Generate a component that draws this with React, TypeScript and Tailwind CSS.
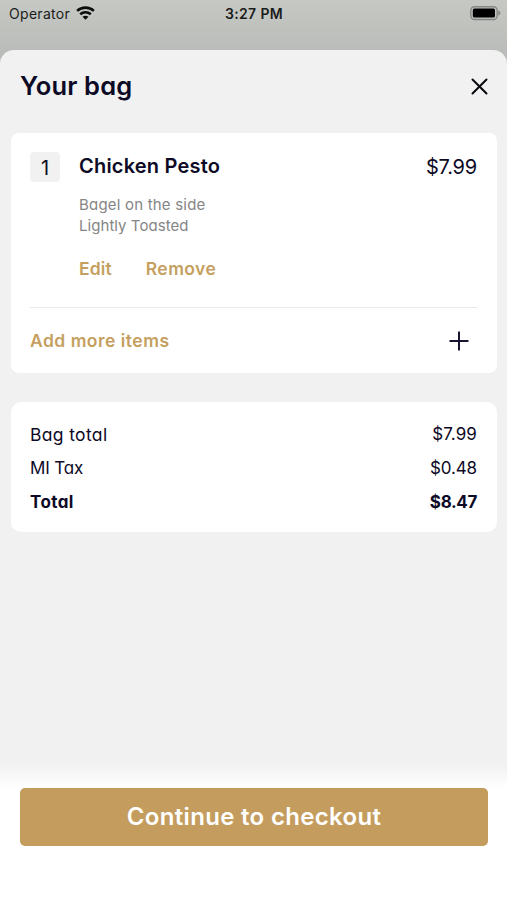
import React from "react";

function WifiIcon() {
  return (
    <svg width="19" height="14" viewBox="0 0 19 14" fill="none" stroke="#0c0e0c" strokeWidth="2.6">
      <path d="M1.1 4.9C5.8 0.5 13.2 0.5 17.9 4.9" />
      <path d="M4.2 8.3C7.2 5.6 11.8 5.6 14.8 8.3" />
      <path d="M9.5 13.8L6.5 10.7C8.2 9.3 10.8 9.3 12.5 10.7Z" fill="#0c0e0c" stroke="none" />
    </svg>
  );
}

function BatteryIcon() {
  return (
    <svg width="31" height="15" viewBox="0 0 31 15" fill="none">
      <rect x="0.8" y="0.7" width="26.4" height="12.8" rx="3.8" stroke="#848682" strokeWidth="1.4" />
      <rect x="2.8" y="2.4" width="22.2" height="9.2" rx="1.6" fill="#000" />
      <path d="M28.4 4.6C31 5.5 31 8.7 28.4 9.6Z" fill="#848682" />
    </svg>
  );
}

function SummaryRow({ label, labelClass, value, valueClass }: { label: string; labelClass: string; value: string; valueClass: string }) {
  return (
    <div className="flex h-[34px] items-center justify-between">
      <span className={labelClass}>{label}</span>
      <span className={valueClass}>{value}</span>
    </div>
  );
}

export default function App() {
  return (
    <div className="flex h-[900px] w-[507px] flex-col overflow-hidden bg-linear-to-b from-[#c6c8c4] from-0% to-[#b7bab6] to-[60px] font-['Inter',sans-serif] whitespace-nowrap text-[#0d0a26] [font-feature-settings:'cv11']">
      <header className="grid h-[50px] shrink-0 grid-cols-3 items-start pr-[6px] pl-[9px] text-[14px] leading-[28px] text-[#1b1d1b]">
        <div className="flex gap-[6px] [font-feature-settings:normal]">
          <span className="tracking-[0.3px]">Operator</span>
          <span className="pt-[6px]"><WifiIcon /></span>
        </div>
        <div className="pr-[2px] text-center font-semibold tracking-[0.35px]">3:27 PM</div>
        <div className="flex justify-end pt-[6px]"><BatteryIcon /></div>
      </header>

      <main className="flex flex-1 flex-col rounded-t-[14px] bg-[#f1f1f1]">
        <div className="flex h-[83px] shrink-0 items-center justify-between pr-[19px] pb-[10px] pl-[20px]">
          <h1 className="text-[25.5px] font-semibold tracking-[0.15px]">Your bag</h1>
          <svg width="17" height="17" viewBox="0 0 17 17" stroke="#08080e" strokeWidth="2" strokeLinecap="round">
            <path d="M1.5 1.5L15.5 15.5M15.5 1.5L1.5 15.5" />
          </svg>
        </div>

        <section className="mx-[11px] mr-[10px] flex h-[240px] shrink-0 flex-col rounded-[8px] bg-white pr-[20px] pl-[19px]">
          <div className="flex h-[175px] items-start border-b border-[#e9e9e9] pt-[19px]">
            <div className="flex h-[30px] w-[30px] items-center justify-center rounded-[4px] bg-[#f1f1f1] pt-px text-[20px]">1</div>
            <div className="ml-[19px] flex-1">
              <h2 className="text-[20px] leading-[28px] font-semibold tracking-[0.2px]">Chicken Pesto</h2>
              <div className="mt-[14px] text-[15px] leading-[21px] text-[#858585]">
                <p className="tracking-[0.2px]">Bagel on the side</p>
                <p className="tracking-[0.05px]">Lightly Toasted</p>
              </div>
              <div className="mt-[20px] flex gap-[34px] text-[17.5px] leading-[26px] font-semibold text-[#c59f60]">
                <button className="tracking-[0.1px]">Edit</button>
                <button className="tracking-[0.45px]">Remove</button>
              </div>
            </div>
            <span className="pt-px text-[20px] leading-[28px] tracking-[-0.2px]">$7.99</span>
          </div>
          <div className="flex flex-1 items-center justify-between pt-px pr-[8px] text-[#c59f60]">
            <button className="text-[17.5px] font-semibold tracking-[0.48px]">Add more items</button>
            <svg width="20" height="20" viewBox="0 0 20 20" stroke="#17152f" strokeWidth="2">
              <path d="M10 0.5V19.5M0.5 10H19.5" />
            </svg>
          </div>
        </section>

        <section className="mx-[11px] mt-[29px] mr-[10px] h-[130px] shrink-0 rounded-[10px] bg-white pt-[16px] pr-[20px] pl-[19px] text-[17px]">
          <SummaryRow label="Bag total" labelClass="text-[17.5px] tracking-[0.35px]" value="$7.99" valueClass="tracking-[0.1px]" />
          <SummaryRow label="MI Tax" labelClass="tracking-[-0.15px]" value="$0.48" valueClass="tracking-[-0.1px]" />
          <SummaryRow label="Total" labelClass="font-bold tracking-[0.4px]" value="$8.47" valueClass="font-bold tracking-[-0.35px]" />
        </section>

        <footer className="mt-auto flex h-[138px] shrink-0 flex-col bg-linear-to-b from-[#f1f1f1] from-[2px] to-white to-[26px] px-5 pt-[26px]">
          <button className="h-[58px] w-[468px] rounded-[5px] bg-[#c49c5e] text-[24px] font-semibold text-white tracking-[0.32px]">Continue to checkout</button>
        </footer>
      </main>
    </div>
  );
}
